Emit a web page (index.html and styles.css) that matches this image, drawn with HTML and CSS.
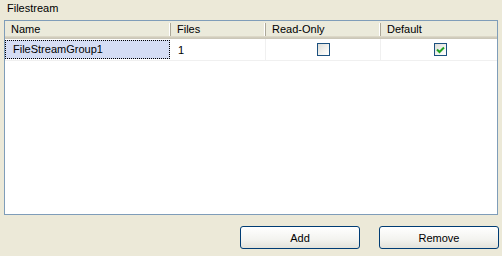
FILE: index.html
```html
<!DOCTYPE html>
<html>
<head>
<meta charset="utf-8">
<link rel="stylesheet" href="styles.css">
</head>
<body>
<div class="panel">
  <div class="title">Filestream</div>
  <div class="listview">
    <div class="header">
      <div class="hcell">Name</div>
      <div class="hcell">Files</div>
      <div class="hcell">Read-Only</div>
      <div class="hcell">Default</div>
    </div>
    <div class="row">
      <div class="cell name"><span class="sel">FileStreamGroup1</span></div>
      <div class="cell">1</div>
      <div class="cell center"><span class="check"></span></div>
      <div class="cell center"><span class="check checked"><svg width="9" height="8" viewBox="0 0 9 8"><path d="M1 3.5 L3.5 6 L8 1.5" fill="none" stroke="#21a121" stroke-width="2"/></svg></span></div>
    </div>
  </div>
  <div class="buttons">
    <button class="btn">Add</button>
    <button class="btn">Remove</button>
  </div>
</div>
</body>
</html>
```
FILE: styles.css
```css
html, body {
  margin: 0;
  padding: 0;
  background: #ece9d8;
  font-family: "Liberation Sans", Arial, sans-serif;
  font-size: 11px;
  color: #000;
}
.panel {
  width: 502px;
  height: 256px;
  display: flex;
  flex-direction: column;
}
.title {
  padding: 2px 0 0 7px;
  height: 20px;
  line-height: 13px;
  box-sizing: border-box;
}
.listview {
  margin: 0 4px 0 4px;
  height: 195px;
  box-sizing: border-box;
  border: 1px solid #7f9db9;
  background: #fff;
}
.header, .row {
  display: grid;
  grid-template-columns: 166px 95px 115px 1fr;
}
.header {
  height: 18px;
  background: linear-gradient(#ebeadb 0, #ebeadb 15px, #e2decd 15px, #d6d2c2 16px, #cbc7b8 17px);
}
.hcell {
  padding-left: 6px;
  border-right: 1px solid #aca899;
  box-shadow: inset -1px 0 0 #fff;
  margin: 2px 0 3px 0;
  line-height: 13px;
}
.hcell:last-child { border-right: none; box-shadow: none; }
.row {
  height: 21px;
  border-bottom: 1px solid #f0f0f0;
}
.cell {
  border-right: 1px solid #f0f0f0;
  padding-left: 7px;
  display: flex;
  align-items: center;
}
.cell:last-child { border-right: none; }
.cell.name {
  padding: 1px 1px 1px 0;
  border-right: none;
}
.sel {
  flex: 1;
  align-self: stretch;
  background: #d5ddf4;
  border: 1px dotted #000;
  padding-left: 7px;
  line-height: 17px;
}
.center { justify-content: center; padding-left: 0; }
.check {
  width: 11px;
  height: 11px;
  border: 1px solid #1c5180;
  background: linear-gradient(135deg, #dcdcd7, #f4f4f1 60%, #fff);
  display: flex;
  align-items: center;
  justify-content: center;
}
.checked { margin-left: 3px; }
.buttons {
  display: flex;
  justify-content: flex-end;
  gap: 19px;
  margin: 11px 3px 0 0;
}
.btn {
  width: 120px;
  height: 23px;
  border: 1px solid #003c74;
  border-radius: 3px;
  background: linear-gradient(#ffffff, #f3f3ef 60%, #e3e2da);
  font-family: "Liberation Sans", Arial, sans-serif;
  font-size: 11px;
  color: #000;
  padding: 0;
}
```
